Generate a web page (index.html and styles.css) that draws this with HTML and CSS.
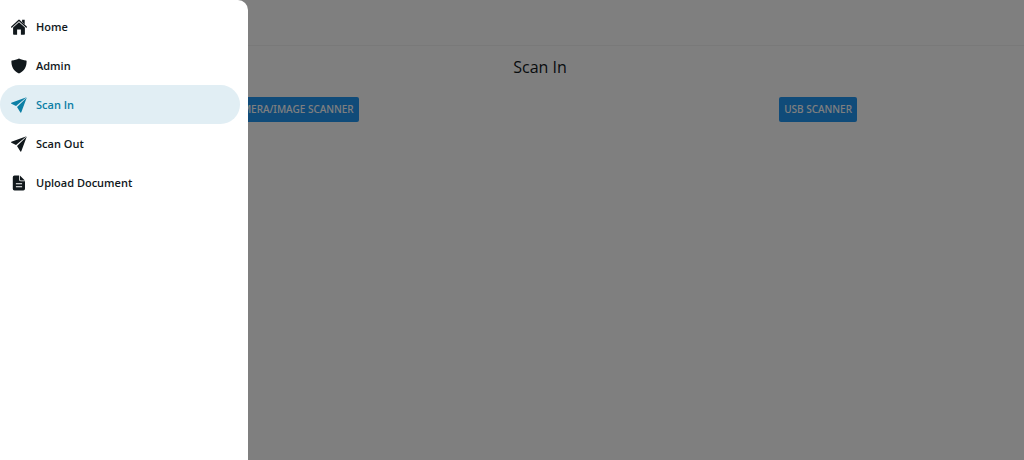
FILE: index.html
```html
<!DOCTYPE html>
<html lang="en">
<head>
<meta charset="utf-8">
<meta name="viewport" content="width=device-width, initial-scale=1">
<title>Scan In</title>
<link rel="stylesheet" href="styles.css">
</head>
<body>
<div class="page">
  <header class="topbar"></header>
  <main class="content">
    <h1 class="title">Scan In</h1>
    <div class="actions">
      <button class="btn" type="button">CAMERA/IMAGE SCANNER</button>
      <button class="btn" type="button">USB SCANNER</button>
    </div>
  </main>
</div>
<div class="backdrop"></div>
<nav class="drawer" aria-label="Main">
  <a class="item" href="#home">
    <svg class="icon" viewBox="0 0 16 16" aria-hidden="true"><path d="M8 3.300l5.900 5.200V15a.7.7 0 0 1-.7.7H9.900V10.500H6.100v5.200H2.800a.7.7 0 0 1-.7-.7V8.500z"/><path d="M.7 8L8 1.300 15.300 8" fill="none" stroke="currentColor" stroke-width="1.300" stroke-linecap="round" stroke-linejoin="round"/><path d="M11.100.7h2.600v4.800l-2.600-2.400z"/></svg>
    <span>Home</span>
  </a>
  <a class="item" href="#admin">
    <svg class="icon" viewBox="0 0 16 16" aria-hidden="true"><path d="M8 .5c2.300 1.100 4.600 1.800 7.100 2 .3 0 .5.300.5.600C15.700 8.500 13.500 13.200 8 15.600 2.500 13.200.3 8.500.4 3.100c0-.3.2-.6.500-.6C3.400 2.300 5.700 1.600 8 .5z"/></svg>
    <span>Admin</span>
  </a>
  <a class="item active" href="#scan-in" aria-current="page">
    <svg class="icon" viewBox="0 0 16 16" aria-hidden="true"><path d="M15.500.3L.4 5.800c-.5.200-.5.700 0 .9L5 9.100z"/><path d="M15.800.6L10.300 15.300c-.2.500-.7.500-.9.100L6 9.900z"/></svg>
    <span>Scan In</span>
  </a>
  <a class="item" href="#scan-out">
    <svg class="icon" viewBox="0 0 16 16" aria-hidden="true"><path d="M15.500.3L.4 5.800c-.5.200-.5.700 0 .9L5 9.100z"/><path d="M15.800.6L10.300 15.300c-.2.500-.7.500-.9.100L6 9.900z"/></svg>
    <span>Scan Out</span>
  </a>
  <a class="item" href="#upload">
    <svg class="icon" viewBox="0 0 16 16" aria-hidden="true"><path fill-rule="evenodd" d="M3.500.5h4.600v4.100c0 1 .6 1.600 1.600 1.600H14v7.600a1.700 1.700 0 0 1-1.700 1.700H3.500a1.700 1.700 0 0 1-1.700-1.700V2.200A1.700 1.700 0 0 1 3.500.500zM4.900 8.300v1h6.200V8.300zm0 3v1h6.200v-1z"/><path d="M8.900.6L13.900 5.400H9.700c-.5 0-.8-.2-.8-.7z"/></svg>
    <span>Upload Document</span>
  </a>
</nav>
</body>
</html>
```
FILE: styles.css
```css
* {
  box-sizing: border-box;
}

body {
  margin: 0;
  font-family: "Open Sans", "Noto Sans", sans-serif;
  color: #11181c;
  background: #fff;
}

.page {
  min-height: 100vh;
  padding-left: 56px;
}

.topbar {
  height: 46px;
  margin-left: -56px;
  border-bottom: 1px solid #f2f2f2;
}

.title {
  margin: 0;
  padding: 9px 0 17px;
  font-size: 16px;
  font-weight: 400;
  line-height: 25px;
  text-align: center;
}

.actions {
  display: flex;
  justify-content: space-between;
  padding: 0 167px 0 168px;
}

.btn {
  height: 25px;
  padding: 0 5px;
  border: 0;
  border-radius: 2px;
  background: #2196f3;
  color: #fff;
  font: 500 10px/25px "Noto Sans", sans-serif;
}

.backdrop {
  position: fixed;
  inset: 0;
  background: rgba(0, 0, 0, 0.5);
}

.drawer {
  position: fixed;
  top: 0;
  bottom: 0;
  left: 0;
  width: 248px;
  padding: 7px 8px 8px 0;
  border-radius: 0 10px 0 0;
  background: #fff;
}

.item {
  display: flex;
  align-items: center;
  gap: 9px;
  height: 39px;
  padding: 0 11px;
  border-radius: 20px;
  color: #11181c;
  font-size: 11px;
  font-weight: 600;
  text-decoration: none;
}

.active {
  background: #e1eef4;
  color: #0c7fa5;
}

.icon {
  width: 16px;
  height: 16px;
  fill: currentColor;
}
```
